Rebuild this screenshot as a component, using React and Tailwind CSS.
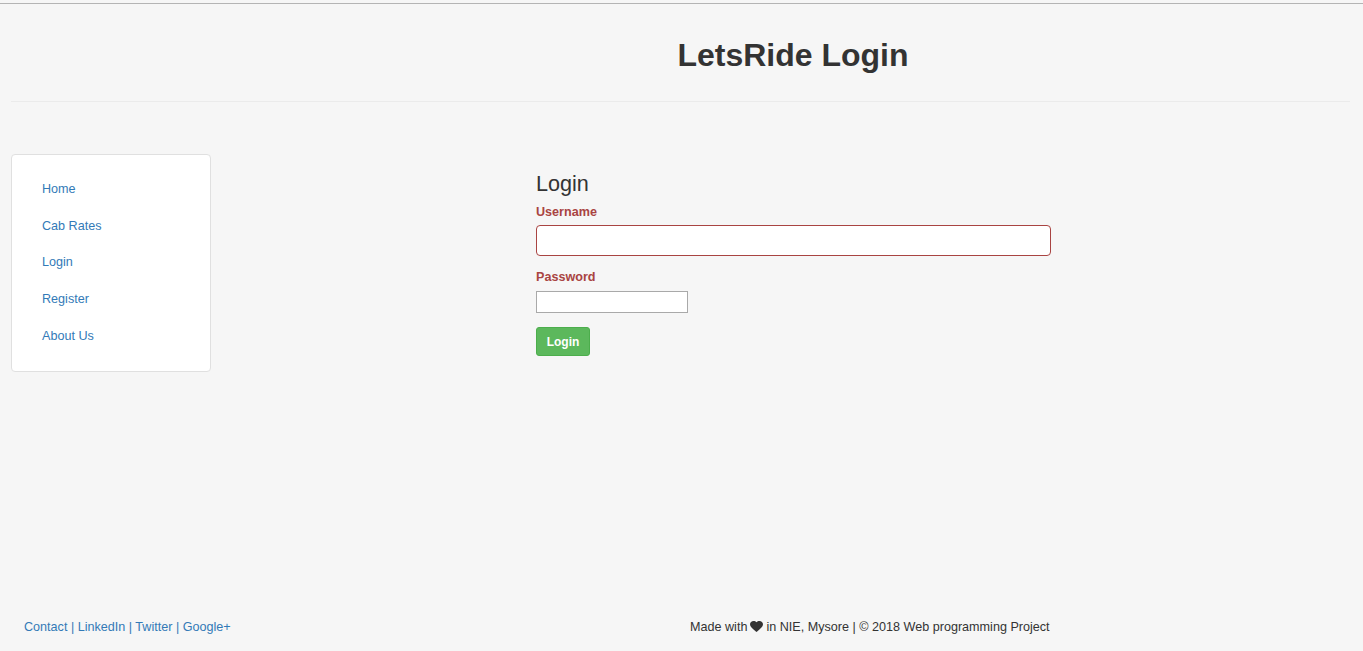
export default function App() {
  const links = ["Home", "Cab Rates", "Login", "Register", "About Us"];
  return (
    <div className="min-h-[651px] bg-[#f6f6f6] font-['Liberation_Sans',Arial,sans-serif] text-[12.6px] text-[#333] flex flex-col">
      <div className="h-[3px]" />
      <div className="h-px bg-[#b4b4b4]" />
      <div className="mt-[34px] pl-[223px] text-center">
        <h1 className="text-[32px] font-bold leading-[35px] h-[35px] text-[#333]">LetsRide Login</h1>
      </div>
      <div className="ml-[11px] mr-[13px] h-px bg-[#ebebeb] mt-[28px]" />
      <div className="flex mt-[52px]">
        <div className="ml-[11px] w-[200px] h-[218px] bg-white border border-[#e0e0e0] rounded-[4px] pt-[15.6px] pl-[30px] flex flex-col">
          {links.map((l) => (
            <a key={l} className="h-[36.75px] flex items-center text-[#337ab7] leading-[18px]">
              {l}
            </a>
          ))}
        </div>
        <div className="ml-[325px] w-[515px] flex flex-col">
          <h3 className="mt-[17.5px] text-[21.6px] leading-[24px] text-[#333]">Login</h3>
          <label className="mt-[7.5px] font-bold leading-[18px] text-[#a94442]">Username</label>
          <input type="text" className="mt-[3.5px] h-[31px] w-[515px] bg-white border border-[#a94442] rounded-[4px] outline-none" />
          <label className="mt-[12.5px] font-bold leading-[18px] text-[#a94442]">Password</label>
          <input type="password" className="mt-[5px] h-[22px] w-[152px] bg-white border border-[#a9a9a9] outline-none" />
          <div className="mt-[14px]">
            <button className="h-[29px] w-[54px] bg-[#5cb85c] border border-[#4cae4c] rounded-[3px] text-white font-bold text-[12px] leading-[16px]">
              Login
            </button>
          </div>
        </div>
      </div>
      <div className="mt-auto pb-[15.4px] flex leading-[18px]">
        <div className="w-[690px] pl-[24px] text-[#337ab7]">
          <a>Contact</a> | <a>LinkedIn</a> | <a>Twitter</a> | <a>Google+</a>
        </div>
        <div className="flex items-center text-[#333]">
          <span>Made with</span>
          <svg className="mx-[3px]" width="13" height="11" viewBox="2 3 20 18.35" preserveAspectRatio="none">
            <path fill="#333" d="M12 21.35l-1.45-1.32C5.4 15.36 2 12.28 2 8.5 2 5.42 4.42 3 7.5 3c1.74 0 3.41.81 4.5 2.09C13.09 3.81 14.76 3 16.5 3 19.58 3 22 5.42 22 8.5c0 3.78-3.4 6.86-8.55 11.54L12 21.35z" />
          </svg>
          <span>in NIE, Mysore | © 2018 Web programming Project</span>
        </div>
      </div>
    </div>
  );
}
